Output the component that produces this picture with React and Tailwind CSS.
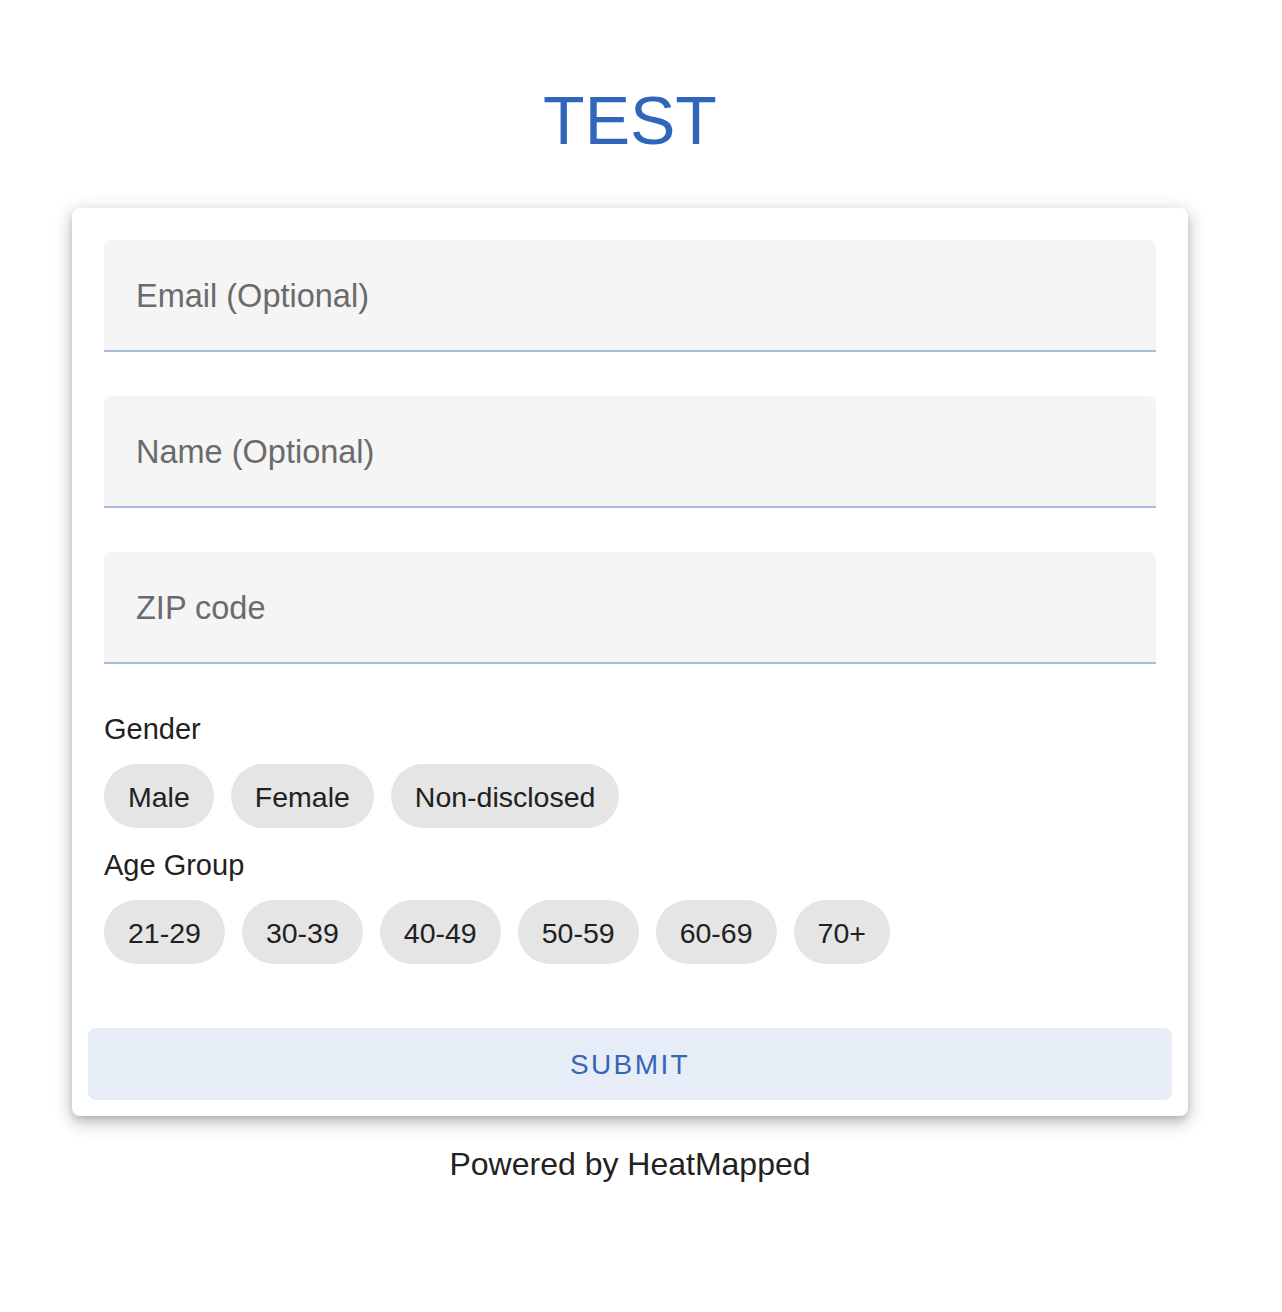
const GENDERS = ['Male', 'Female', 'Non-disclosed'];
const AGES = ['21-29', '30-39', '40-49', '50-59', '60-69', '70+'];

function Field({ label }) {
  return (
    <div className="h-[112px] rounded-t-[8px] bg-[#f5f5f5] border-b-2 border-[#a9bbdd] flex items-center px-[32px] pt-[2px]">
      <span className="text-[32.5px] leading-[40px] text-[#6b6b6b]">{label}</span>
    </div>
  );
}

function Chip({ children }) {
  return (
    <button className="h-[64px] rounded-full bg-[#e5e5e5] px-[24px] pt-[2px] text-[28.5px] leading-[62px] text-[#212121] whitespace-nowrap">
      {children}
    </button>
  );
}

export default function App() {
  return (
    <div className="min-h-screen bg-white" style={{ fontFamily: '"Liberation Sans", Arial, sans-serif' }}>
      <div className="w-[1260px] px-[72px] pt-[86px] pb-[128px] flex flex-col items-center">
        <h1 className="text-[68px] leading-[68px] text-[#2f66b9]">TEST</h1>

        {/* Card */}
        <div className="mt-[54px] w-full bg-white rounded-[8px] shadow-[0_4px_8px_-2px_rgba(0,0,0,0.2),0_8px_16px_2px_rgba(0,0,0,0.12),0_2px_20px_2px_rgba(0,0,0,0.1)] pt-[32px] px-[16px] pb-[16px]">
          <div className="px-[16px] flex flex-col gap-[44px]">
            <Field label="Email (Optional)" />
            <Field label="Name (Optional)" />
            <Field label="ZIP code" />
          </div>

          <div className="px-[16px] mt-[46px]">
            <p className="text-[29px] leading-[36px] text-[#212121] pt-[1px] -mb-[1px]">Gender</p>
            <div className="mt-[18px] flex gap-[17px]">
              {GENDERS.map((g) => (
                <Chip key={g}>{g}</Chip>
              ))}
            </div>

            <p className="mt-[18px] text-[29px] leading-[36px] text-[#212121] pt-[1px] -mb-[1px]">Age Group</p>
            <div className="mt-[18px] flex gap-[17px]">
              {AGES.map((a) => (
                <Chip key={a}>{a}</Chip>
              ))}
            </div>
          </div>

          <button className="mt-[64px] w-full h-[72px] rounded-[8px] bg-[#e6edf6] text-[28px] tracking-[2.4px] text-[#3466b8] pt-[2px]">
            SUBMIT
          </button>
        </div>

        <p className="mt-[28px] text-[32px] leading-[40px] text-[#222222]">Powered by HeatMapped</p>
      </div>
    </div>
  );
}
